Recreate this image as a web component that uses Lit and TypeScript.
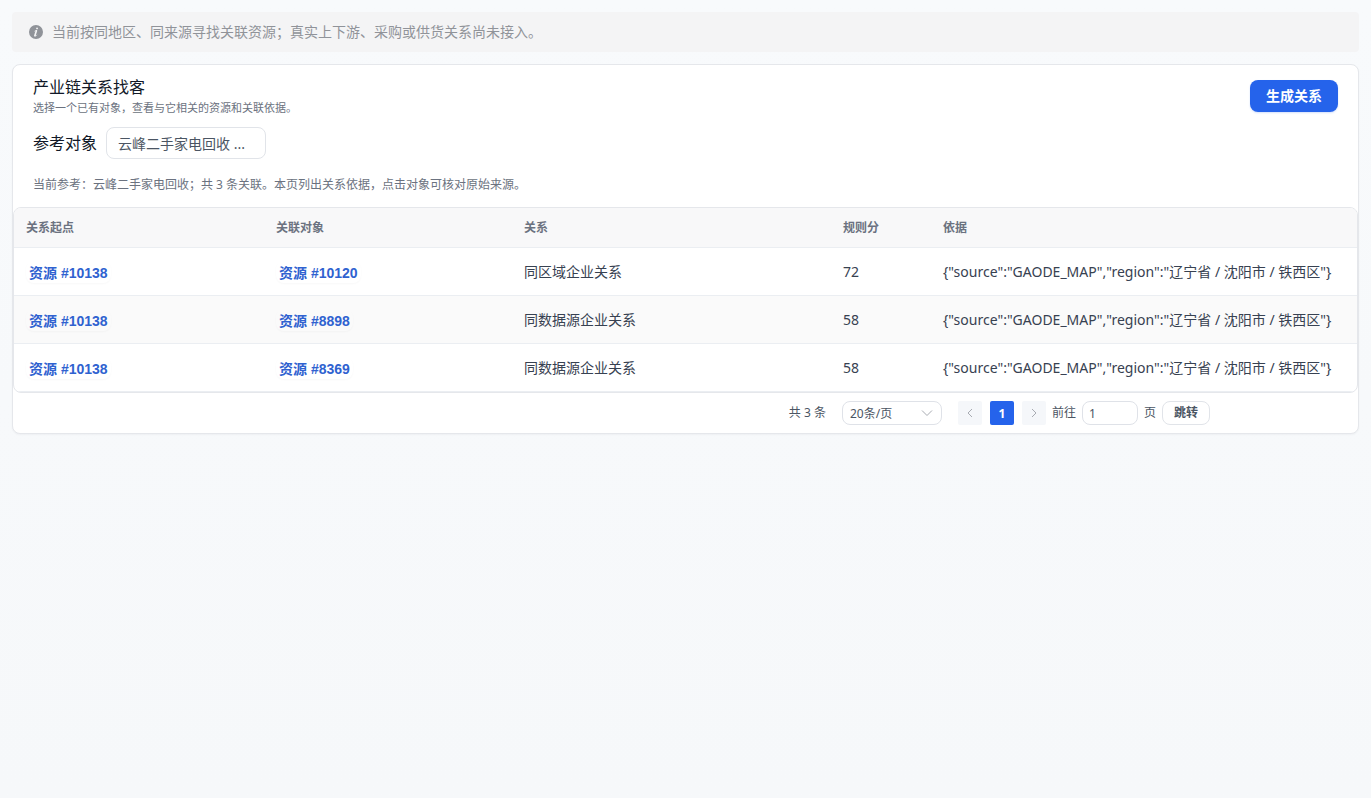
import { LitElement, html, css } from "lit";
import { customElement, state } from "lit/decorators.js";

interface Relation {
  from: string;
  to: string;
  kind: string;
  score: number;
  basis: string;
}

const BASIS = '{"source":"GAODE_MAP","region":"辽宁省 / 沈阳市 / 铁西区"}';

@customElement("app-root")
export class AppRoot extends LitElement {
  @state() private rows: Relation[] = [
    { from: "10138", to: "10120", kind: "同区域企业关系", score: 72, basis: BASIS },
    { from: "10138", to: "8898", kind: "同数据源企业关系", score: 58, basis: BASIS },
    { from: "10138", to: "8369", kind: "同数据源企业关系", score: 58, basis: BASIS },
  ];

  static styles = css`
    :host {
      display: block;
      box-sizing: border-box;
      min-height: 100vh;
      padding: 12px;
      background: linear-gradient(#f8fafc, #f6f8fa);
      color: #111827;
      font-family: "Noto Sans", "Noto Sans CJK SC", sans-serif;
      font-size: 14px;
      line-height: 20px;
    }
    *, *::before, *::after { box-sizing: border-box; }
    h1, p { margin: 0; font-weight: 400; }
    button, input, select { font-family: inherit; margin: 0; }

    .alert {
      display: flex;
      align-items: center;
      gap: 8px;
      height: 40px;
      padding: 0 16px;
      margin-bottom: 12px;
      border-radius: 4px;
      background: #f4f4f5;
      color: #909399;
    }
    .alert svg { width: 16px; height: 16px; flex: none; }

    .card {
      border: 1px solid #e5e7eb;
      border-radius: 8px;
      background: #fff;
      box-shadow: 0 1px 2px rgba(15, 23, 42, 0.04);
    }
    .top { padding: 12px 20px; }
    .head {
      display: flex;
      align-items: center;
      justify-content: space-between;
    }
    .titles { display: grid; gap: 4px; }
    .title { font-size: 16px; line-height: 20px; }
    .subtitle { font-size: 11px; line-height: 14px; color: #6b7280; }
    .primary {
      height: 32px;
      padding: 0 16px;
      border: 0;
      border-radius: 8px;
      background: #2563eb;
      color: #fff;
      font-size: 14px;
      font-weight: 700;
      line-height: 20px;
      box-shadow: 0 1px 2px rgba(37, 99, 235, 0.2);
    }
    .ref {
      display: flex;
      align-items: center;
      gap: 9px;
      margin: 12px 0 16px;
    }
    .ref label { font-size: 16px; }
    .ref select {
      appearance: none;
      width: 160px;
      height: 32px;
      padding: 0 11px;
      border: 1px solid #e1e4e9;
      border-radius: 8px;
      background: #fff;
      color: #4b5563;
      font-size: 14px;
    }
    .note { font-size: 12px; line-height: 20px; color: #6b7280; }

    .table-wrap {
      overflow: hidden;
      border: 1px solid #e5e7eb;
      border-radius: 8px;
    }
    table {
      width: 100%;
      table-layout: fixed;
      border-collapse: separate;
      border-spacing: 0;
    }
    .c-from { width: 250px; }
    .c-to { width: 248px; }
    .c-kind { width: 319px; }
    .c-score { width: 100px; }
    th, td {
      padding: 0 12px;
      border-bottom: 1px solid #ebeef2;
      text-align: left;
      white-space: nowrap;
    }
    th {
      height: 40px;
      background: #f8f8f9;
      color: #6b7280;
      font-size: 12px;
      font-weight: 700;
    }
    td { height: 48px; color: #374151; }
    tbody tr:nth-child(even) td { background: #fafafa; }
    .link {
      display: block;
      width: fit-content;
      padding: 2px 3px 0;
      border-radius: 8px;
      color: #2f62d0;
      font-family: "Liberation Sans", "Noto Sans CJK SC", sans-serif;
      font-weight: 700;
      text-decoration: none;
      box-shadow: 0 1px 2px rgba(15, 23, 42, 0.03);
    }

    .pager {
      display: flex;
      align-items: center;
      justify-content: flex-end;
      gap: 16px;
      padding: 8px 148px 8px 12px;
      color: #4b5563;
      font-size: 12px;
      line-height: 24px;
    }
    .size { position: relative; display: block; }
    .size select {
      appearance: none;
      display: block;
      width: 100px;
      height: 24px;
      padding: 0 7px;
      border: 1px solid #dfe2e8;
      border-radius: 8px;
      background: #fff;
      color: #4b5563;
      font-size: 12px;
    }
    .size svg {
      position: absolute;
      top: 6px;
      right: 9px;
      width: 12px;
      height: 12px;
      pointer-events: none;
    }
    .pages { display: flex; gap: 8px; }
    .page {
      display: grid;
      place-items: center;
      width: 24px;
      height: 24px;
      padding: 0;
      border: 0;
      border-radius: 2px;
      background: #f5f7fa;
      color: #a8abb2;
      font-size: 12px;
    }
    .page svg { width: 12px; height: 12px; }
    .page.current { background: #2563eb; color: #fff; font-weight: 700; }
    .nav { display: flex; align-items: center; gap: 6px; }
    .jump { display: flex; align-items: center; gap: 6px; }
    .jump label { display: flex; align-items: center; gap: 6px; }
    .jump input {
      width: 56px;
      height: 24px;
      padding: 0 6px;
      border: 1px solid #dfe2e8;
      border-radius: 8px;
      background: #fff;
      color: #4b5563;
      font-size: 12px;
    }
    .go {
      width: 48px;
      height: 24px;
      padding: 0;
      border: 1px solid #e1e4e9;
      border-radius: 8px;
      background: #fff;
      color: #4b5563;
      font-size: 12px;
      font-weight: 700;
      line-height: 20px;
    }
  `;

  render() {
    return html`
      <div class="alert" role="note" lang="zh-CN">
        <svg viewBox="0 0 1024 1024" fill="currentColor" aria-hidden="true">
          <path d="M512 64a448 448 0 1 1 0 896.064A448 448 0 0 1 512 64m67.2 275.072c33.28 0 60.288-23.104 60.288-57.344s-27.072-57.344-60.288-57.344c-33.28 0-60.16 23.104-60.16 57.344s26.88 57.344 60.16 57.344M590.912 699.2c0-6.848 2.368-24.64 1.024-34.752l-52.608 60.544c-10.88 11.456-24.512 19.392-30.912 17.28a12.99 12.99 0 0 1-8.256-14.72l87.68-276.992c7.168-35.136-12.544-67.2-54.336-71.296-44.096 0-108.992 44.736-148.48 101.504 0 6.784-1.28 23.68.064 33.792l52.544-60.608c10.88-11.328 23.552-19.328 29.952-17.152a12.8 12.8 0 0 1 7.808 16.128L388.48 728.576c-10.048 32.256 8.96 63.872 55.04 71.04 67.84 0 107.904-43.648 147.456-100.416z"/>
        </svg>
        <span>当前按同地区、同来源寻找关联资源；真实上下游、采购或供货关系尚未接入。</span>
      </div>

      <main class="card" lang="zh-CN">
        <section class="top">
          <header class="head">
            <div class="titles">
              <h1 class="title">产业链关系找客</h1>
              <p class="subtitle">选择一个已有对象，查看与它相关的资源和关联依据。</p>
            </div>
            <button class="primary" type="button">生成关系</button>
          </header>
          <div class="ref">
            <label for="ref">参考对象</label>
            <select id="ref"><option>云峰二手家电回收 ...</option></select>
          </div>
          <p class="note">当前参考：云峰二手家电回收；共 3 条关联。本页列出关系依据，点击对象可核对原始来源。</p>
        </section>

        <div class="table-wrap">
          <table>
            <colgroup>
              <col class="c-from" /><col class="c-to" /><col class="c-kind" /><col class="c-score" /><col />
            </colgroup>
            <thead>
              <tr><th>关系起点</th><th>关联对象</th><th>关系</th><th>规则分</th><th>依据</th></tr>
            </thead>
            <tbody>
              ${this.rows.map(
                (r) => html`<tr>
                  <td><a class="link" href="#${r.from}">资源 #${r.from}</a></td>
                  <td><a class="link" href="#${r.to}">资源 #${r.to}</a></td>
                  <td>${r.kind}</td>
                  <td>${r.score}</td>
                  <td>${r.basis}</td>
                </tr>`
              )}
            </tbody>
          </table>
        </div>

        <footer class="pager">
          <span>共 ${this.rows.length} 条</span>
          <div class="size">
            <select aria-label="每页条数"><option>20条/页</option></select>
            <svg viewBox="0 0 12 12" fill="none" stroke="#a8abb2" aria-hidden="true"><path d="M1 3.5 6 8.5 11 3.5"/></svg>
          </div>
          <div class="nav">
            <div class="pages">
              <button class="page" type="button" aria-label="上一页" disabled>
                <svg viewBox="0 0 12 12" fill="none" stroke="currentColor"><path d="M8 2 4 6 8 10"/></svg>
              </button>
              <button class="page current" type="button" aria-current="page">1</button>
              <button class="page" type="button" aria-label="下一页" disabled>
                <svg viewBox="0 0 12 12" fill="none" stroke="currentColor"><path d="M4 2 8 6 4 10"/></svg>
              </button>
            </div>
            <div class="jump">
              <label>前往 <input type="text" inputmode="numeric" .value=${"1"} /> 页</label>
              <button class="go" type="button">跳转</button>
            </div>
          </div>
        </footer>
      </main>
    `;
  }
}
